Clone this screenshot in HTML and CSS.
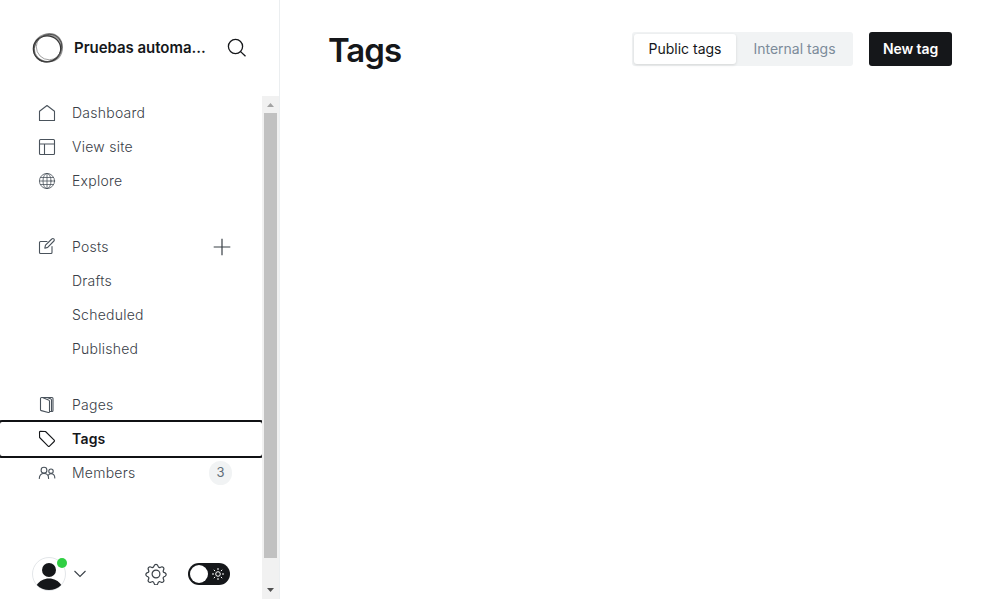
FILE: index.html
```html
<!DOCTYPE html>
<html lang="en">
<head>
<meta charset="utf-8">
<title>Tags</title>
<link rel="stylesheet" href="styles.css">
</head>
<body>
<div class="app">
  <aside class="sidebar">
    <header class="site">
      <svg class="logo" viewBox="0 0 32 32" fill="none">
        <path fill-rule="evenodd" fill="#999" d="M1 17C1 7 8 2 17 1c8-.5 14 6 14 14 0 9-5 15-15 15.500C7 31 1 25 1 17zM3 17c0 7 6 12 13 12 7.500 0 12.500-7 12.500-13C28.500 9 23 4 16 4S3 10 3 17z"/>
        <ellipse cx="15" cy="16.800" rx="13.700" ry="13" stroke="#333" stroke-width="1.200"/>
        <ellipse cx="17.300" cy="14.800" rx="13" ry="13" stroke="#777" stroke-width=".7"/>
        <ellipse cx="15.800" cy="16" rx="14.800" ry="12.800" transform="rotate(-42 16 16)" stroke="#444" stroke-width=".8"/>
      </svg>
      <span class="site-name">Pruebas automa...</span>
      <svg class="search" viewBox="0 0 20 20" fill="none" stroke="#15171a" stroke-width="1.300"><circle cx="8.500" cy="8.500" r="7.100"/><path d="M13.600 13.600 18.500 18.300"/></svg>
    </header>
    <div class="body">
      <div class="column">
        <nav class="menu">
          <div class="group">
            <a class="item"><svg class="icon" viewBox="0 0 18 18"><path d="M1.500 7.200 9 1.500l7.500 5.700v9.300h-15z"/></svg><span class="label">Dashboard</span></a>
            <a class="item"><svg class="icon" viewBox="0 0 18 18"><rect x="1.500" y="1.500" width="15" height="15" rx="1"/><path d="M1.500 6h15M6.500 6v10.500"/></svg><span class="label">View site</span></a>
            <a class="item"><svg class="icon thin" viewBox="0 0 18 18"><circle cx="9" cy="9" r="7.600"/><ellipse cx="9" cy="9" rx="4" ry="7.600"/><path d="M1.500 9h15M9 1.400v15.200M2.600 5.500h12.800M2.600 12.500h12.800"/></svg><span class="label">Explore</span></a>
          </div>
          <div class="group posts">
            <a class="item"><svg class="icon up" viewBox="0 0 18 18"><path d="M9 4.500H2.500a1 1 0 0 0-1 1v10a1 1 0 0 0 1 1h10.500a1 1 0 0 0 1-1V9.500M6.800 11.200l.7-3L13.800 2a1.400 1.400 0 0 1 2.100 2L9.700 10.400z"/></svg><span class="label">Posts</span><svg class="plus" viewBox="0 0 18 18"><path d="M9 .7v16.600M.7 9h16.600"/></svg></a>
            <a class="item sub"><span class="label">Drafts</span></a>
            <a class="item sub"><span class="label">Scheduled</span></a>
            <a class="item sub"><span class="label">Published</span></a>
          </div>
          <div class="group">
            <a class="item"><svg class="icon" viewBox="0 0 18 18"><path d="M11.500 15.500H14a1 1 0 0 0 1-1V2.500a1 1 0 0 0-1-1H3.500a1 1 0 0 0-1 1v11.200c0 .5.300.8.800.9l7 1.900c.7.200 1.200-.2 1.200-.8V5.200c0-.6-.4-1-1-1.200L5 1.700M9 1.600l3.500 1.200c.6.200 1 .6 1 1.200v11.200"/></svg><span class="label">Pages</span></a>
            <a class="item active"><svg class="icon" viewBox="0 0 18 18"><path d="M1.500 2.300c0-.5.400-.9.900-.9l5.100.1 8.700 8.600a1 1 0 0 1 0 1.400l-4.700 4.700a1 1 0 0 1-1.400 0L1.600 7.500z"/></svg><span class="label">Tags</span></a>
            <a class="item"><svg class="icon" viewBox="0 0 18 18"><circle cx="6" cy="6.200" r="2.900"/><circle cx="13" cy="7.200" r="2.200"/><path d="M1.300 14.500c0-3.300 1.700-5 4.600-5s4.700 1.700 4.700 5M10.600 10.800c.6-.7 1.400-1 2.400-1 2.500 0 3.800 1.700 3.800 4.200"/></svg><span class="label">Members</span><span class="count">3</span></a>
          </div>
        </nav>
        <footer class="account">
          <svg class="avatar" viewBox="0 0 36 36"><circle cx="17" cy="19" r="16.500" fill="#fff" stroke="#e3e6e9"/><circle cx="17" cy="15" r="7" fill="#15171a"/><path d="M4.800 30C7.500 25.700 12 23.500 17 23.500s9.500 2.200 12.200 6.500C26 33.600 21.700 35 17 35S8 33.600 4.800 30z" fill="#15171a"/><circle cx="30" cy="8" r="5" fill="#30cf43"/></svg>
          <svg class="chevron" viewBox="0 0 12 8"><path d="M.5 1 6 6.500 11.500 1"/></svg>
          <svg class="gear" viewBox="0 0 22 22"><circle cx="11" cy="11" r="3.900"/><path d="M9.200 2.600a1.900 1.900 0 0 1 3.600 0l.4 1a1.500 1.500 0 0 0 2 .8l1-.4a1.900 1.900 0 0 1 2.500 2.500l-.4 1a1.500 1.500 0 0 0 .8 2l1 .4a1.900 1.900 0 0 1 0 3.400l-1 .4a1.500 1.500 0 0 0-.8 2l.4 1a1.900 1.900 0 0 1-2.500 2.500l-1-.4a1.500 1.500 0 0 0-2 .8l-.4 1a1.900 1.900 0 0 1-3.600 0l-.4-1a1.500 1.500 0 0 0-2-.8l-1 .4a1.900 1.900 0 0 1-2.500-2.500l.4-1a1.500 1.500 0 0 0-.8-2l-1-.4a1.900 1.900 0 0 1 0-3.400l1-.4a1.500 1.500 0 0 0 .8-2l-.4-1a1.900 1.900 0 0 1 2.500-2.500l1 .4a1.500 1.500 0 0 0 2-.8z"/></svg>
          <span class="toggle"><span class="knob"></span><svg class="sun" viewBox="0 0 12 12"><circle cx="6" cy="6" r="2.300"/><path d="M6 0v2M6 10v2M0 6h2M10 6h2M1.800 1.800l1.300 1.300M8.900 8.900l1.300 1.300M1.800 10.200l1.300-1.300M8.900 3.100l1.300-1.300"/></svg></span>
        </footer>
      </div>
      <div class="scrollbar">
        <svg class="arrow" viewBox="0 0 17 17"><path d="M5 11h7L8.500 7z" fill="#a3a3a3"/></svg>
        <div class="thumb"></div>
        <svg class="arrow" viewBox="0 0 17 17"><path d="M5 6h7L8.500 10z" fill="#505050"/></svg>
      </div>
    </div>
  </aside>
  <main class="main">
    <h1 class="title">Tags</h1>
    <div class="tabs"><span class="tab selected">Public tags</span><span class="tab">Internal tags</span></div>
    <a class="new">New tag</a>
  </main>
</div>
</body>
</html>
```
FILE: styles.css
```css
* { box-sizing: border-box; }
body { margin: 0; background: #fff; color: #15171a; font-family: Inter, "Liberation Sans", sans-serif; }
svg { display: block; flex: none; }
.app { display: flex; height: 599px; overflow: hidden; }
.sidebar { display: flex; flex-direction: column; width: 280px; flex: none; border-right: 1px solid #ebeef0; }
.site { display: flex; align-items: center; height: 96px; padding: 0 32px; flex: none; }
.logo { width: 32px; height: 32px; }
.site-name { margin-left: 10px; margin-bottom: 2px; width: 143px; font-size: 15px; font-weight: 600; letter-spacing: -0.04px; white-space: nowrap; }
.search { width: 20px; height: 20px; margin-left: 10px; }
.body { display: flex; flex: 1; min-height: 0; }
.column { display: flex; flex-direction: column; justify-content: space-between; width: 262px; }
.menu { display: flex; flex-direction: column; gap: 32px; }
.posts { margin-bottom: -10px; }
.item { display: flex; align-items: center; height: 34px; padding: 0 31px 0 38px; font-size: 14px; letter-spacing: 0.25px; color: #394047; font-weight: 325; }
.label { margin-bottom: 1px; line-height: 17px; }
.icon { width: 18px; height: 18px; margin-right: 16px; fill: none; stroke: #4a535c; stroke-width: 1.1; stroke-linejoin: round; stroke-linecap: round; }
.up { margin-bottom: 2px; }
.thin { stroke-width: 0.8; }
.sub { padding-left: 72px; }
.plus { width: 18px; height: 18px; margin-left: auto; fill: none; stroke: #394047; stroke-width: 1.2; }
.active { color: #15171a; font-weight: 600; letter-spacing: 0.2px; outline: 2px solid #101114; border-radius: 2px; }
.active .icon { stroke: #15171a; }
.count { margin: 0 -1px 0 auto; width: 23px; height: 24px; border-radius: 12px; background: #f1f3f4; color: #626d79; font-size: 13px; font-weight: 400; line-height: 23px; text-align: center; letter-spacing: 0; }
.account { display: flex; align-items: center; height: 51px; padding-left: 32px; }
.avatar { width: 36px; height: 36px; margin-top: -2px; }
.chevron { width: 12px; height: 8px; margin-left: 6px; fill: none; stroke: #394047; stroke-width: 1.1; }
.gear { width: 22px; height: 22px; margin-left: 59px; fill: none; stroke: #394047; stroke-width: 1.2; }
.toggle { display: flex; align-items: center; justify-content: space-between; width: 42px; height: 22px; margin-left: 21px; padding: 0 6px 0 2px; border-radius: 11px; background: #15171a; }
.knob { width: 18px; height: 18px; border-radius: 50%; background: #fff; }
.sun { width: 12px; height: 12px; fill: none; stroke: #fff; stroke-width: 1; }
.scrollbar { display: flex; flex-direction: column; justify-content: space-between; width: 17px; background: #f1f1f1; }
.arrow { width: 17px; height: 17px; }
.thumb { width: 13px; height: 445px; margin: 0 2px auto; background: #c1c1c1; }
.main { display: flex; align-items: center; flex: 1; height: 98px; padding: 0 48px 0 48px; }
.title { margin: 2px auto 0 0; font-size: 33px; line-height: 40px; font-weight: 600; letter-spacing: -1px; }
.tabs { display: flex; align-items: center; width: 221px; height: 34px; padding: 2px; border-radius: 3px; background: #f1f3f4; }
.tab { flex: 1; padding-left: 2px; font-size: 14px; line-height: 30px; text-align: center; color: #7c8b9a; font-weight: 425; }
.selected { flex: 0 0 102px; padding-left: 0; border-radius: 3px; background: #fff; color: #15171a; box-shadow: 0 1px 3px rgba(0, 0, 0, 0.12); }
.new { width: 83px; height: 34px; margin-left: 16px; border-radius: 3px; background: #15171a; color: #fff; font-size: 14px; font-weight: 600; letter-spacing: -0.1px; line-height: 34px; text-align: center; }
```
